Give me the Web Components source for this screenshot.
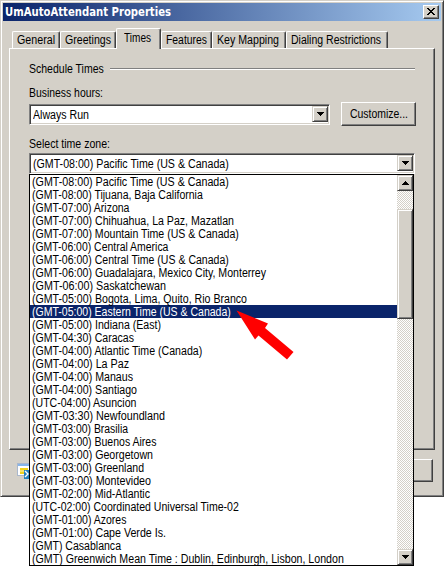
<!DOCTYPE html>
<html lang="en">
<head>
<meta charset="utf-8">
<title>UmAutoAttendant Properties</title>
<style>
html,body{margin:0;background:#fff;height:566px;overflow:hidden}
body{width:444px;position:relative;font:12px "Liberation Sans",Arial,sans-serif;color:#000}
</style>
</head>
<body>
<properties-dialog></properties-dialog>
<script>
const define = (name, html, setup) => customElements.define(name, class extends HTMLElement {
  constructor() {
    super();
    this.attachShadow({ mode: 'open' });
  }
  connectedCallback() {
    if (this.shadowRoot.childNodes.length) return;
    const t = document.createElement('template');
    t.innerHTML = typeof html === 'function' ? html(this) : html;
    this.shadowRoot.append(t.content.cloneNode(true));
    if (setup) setup(this);
  }
});

/* One line of text, condensed to the width given by "w". */
const pen = document.createElement('canvas').getContext('2d');
define('ui-text', `<style>
:host{display:block;height:13px;line-height:13px;white-space:pre;flex:none}
span{display:block;width:max-content;transform-origin:0 0}
</style><span><slot></slot></span>`, el => {
  const w = +el.getAttribute('w');
  pen.font = el.hasAttribute('bold') ? 'bold 11.5px "DejaVu Sans"' : '12px "Liberation Sans"';
  const span = el.shadowRoot.querySelector('span');
  span.style.font = pen.font;
  span.style.lineHeight = '13px';
  el.style.width = w + 'px';
  span.style.transform = `scaleX(${w / pen.measureText(el.textContent).width})`;
});

/* Raised button face. */
define('ui-button', `<style>
:host{display:flex;align-items:center;justify-content:center;box-sizing:border-box;background:#d4d0c8;border:1px solid;border-color:#fff #404040 #404040 #fff;box-shadow:inset -1px -1px #808080;flex:none}
</style><slot></slot>`);

/* Square button with a triangle or a cross. */
define('ui-glyph-button', el => {
  const k = el.getAttribute('kind');
  const d = k === 'up' ? 'M4 9h7v-1h-1v-1h-1v-1h-1v-1h-1v1h-1v1h-1v1h-1z'
    : k === 'down' ? 'M4 5h7v1h-1v1h-1v1h-1v1h-1v-1h-1v-1h-1v-1h-1z'
    : 'M3 2h2v1h1v1h2v-1h1v-1h2v1h-1v1h-1v1h-1v1h1v1h1v1h1v1h-2v-1h-1v-1h-2v1h-1v1h-2v-1h1v-1h1v-1h1v-1h-1v-1h-1v-1h-1z';
  return `<style>
:host{display:block;box-sizing:border-box;width:16px;height:16px;flex:none;background:#d4d0c8;border:1px solid;border-color:#d4d0c8 #404040 #404040 #d4d0c8;box-shadow:inset 1px 1px #fff,inset -1px -1px #808080}
:host([kind=close]){height:14px;border-color:#fff #404040 #404040 #fff;box-shadow:inset -1px -1px #808080}
svg{display:block}
</style><svg width="14" height="${k === 'close' ? 12 : 14}" shape-rendering="crispEdges"><path d="${d}"/></svg>`;
});

define('ui-combo', `<style>
:host{display:flex;box-sizing:border-box;height:21px;background:#fff;border:1px solid;border-color:#808080 #fff #fff #808080;box-shadow:inset 1px 1px #404040,inset -1px -1px #d4d0c8;padding:1px;flex:none}
div{flex:1;padding:3px 0 0 2px}
</style><div><slot></slot></div><ui-glyph-button kind="down"></ui-glyph-button>`);

define('ui-tab', `<style>
:host{display:block;box-sizing:border-box;height:17px;border:solid;border-width:1px 1px 0;border-color:#fff #404040 #fff #fff;border-radius:2px 2px 0 0;box-shadow:inset -1px 0 #808080;padding:2px 0 0 4px;flex:none}
:host([active]){height:21px;padding:3px 0 0 7px;background:#d4d0c8;margin-bottom:-1px;z-index:1;position:relative}
</style><slot></slot>`);

define('ui-titlebar', `<style>
:host{display:flex;align-items:center;justify-content:space-between;box-sizing:border-box;height:18px;padding:0 2px;background:linear-gradient(90deg,#0a246a,#a6caf0);color:#fff;flex:none}
</style><slot></slot><ui-glyph-button kind="close"></ui-glyph-button>`);

define('ui-group-title', `<style>
:host{display:flex;align-items:flex-start;gap:6px;height:13px;flex:none}
i{flex:1;height:1px;background:#808080;border-bottom:1px solid #fff;margin-top:5px}
</style><slot></slot><i></i>`);

define('ui-scrollbar', `<style>
:host{display:flex;flex-direction:column;width:16px;flex:none;background:repeating-conic-gradient(#fff 0 25%,#d4d0c8 0 50%) 0 0/2px 2px}
.thumb{margin-top:18px;height:110px;box-sizing:border-box;background:#d4d0c8;border:1px solid;border-color:#d4d0c8 #404040 #404040 #d4d0c8;box-shadow:inset 1px 1px #fff,inset -1px -1px #808080}
.gap{flex:1}
</style><ui-glyph-button kind="up"></ui-glyph-button><div class="thumb"></div><div class="gap"></div><ui-glyph-button kind="down"></ui-glyph-button>`);

const zones = [
['(GMT-08:00) Pacific Time (US & Canada)',229],['(GMT-08:00) Tijuana, Baja California',203],['(GMT-07:00) Arizona',130],
['(GMT-07:00) Chihuahua, La Paz, Mazatlan',234],['(GMT-07:00) Mountain Time (US & Canada)',239],['(GMT-06:00) Central America',169],
['(GMT-06:00) Central Time (US & Canada)',229],['(GMT-06:00) Guadalajara, Mexico City, Monterrey',266],['(GMT-06:00) Saskatchewan',166],
['(GMT-05:00) Bogota, Lima, Quito, Rio Branco',247],['(GMT-05:00) Eastern Time (US & Canada)',231],['(GMT-05:00) Indiana (East)',161],
['(GMT-04:30) Caracas',134],['(GMT-04:00) Atlantic Time (Canada)',203],['(GMT-04:00) La Paz',129],['(GMT-04:00) Manaus',133],
['(GMT-04:00) Santiago',137],['(UTC-04:00) Asuncion',137],['(GMT-03:30) Newfoundland',165],['(GMT-03:00) Brasilia',128],
['(GMT-03:00) Buenos Aires',157],['(GMT-03:00) Georgetown',153],['(GMT-03:00) Greenland',144],['(GMT-03:00) Montevideo',151],
['(GMT-02:00) Mid-Atlantic',150],['(UTC-02:00) Coordinated Universal Time-02',239],['(GMT-01:00) Azores',127],['(GMT-01:00) Cape Verde Is.',166],
['(GMT) Casablanca',121],['(GMT) Greenwich Mean Time : Dublin, Edinburgh, Lisbon, London',344]];

define('zone-list', `<style>
:host{display:flex;box-sizing:border-box;width:385px;height:392px;background:#fff;border:1px solid #000}
.rows{flex:1;display:flex;flex-direction:column}
.row{box-sizing:border-box;height:13px;padding:1px 0 0 2px}
.sel{background:#0a246a;color:#fff}
</style><div class="rows">${zones.map(([t, r], i) =>
  `<div class="row${i === 10 ? ' sel' : ''}"><ui-text w="${r - 32}">${t.replace('&', '&amp;')}</ui-text></div>`).join('')}</div><ui-scrollbar></ui-scrollbar>`);

define('properties-dialog', `<style>
:host{display:block}
.window{display:flex;flex-direction:column;box-sizing:border-box;width:444px;height:497px;background:#d4d0c8;border:1px solid;border-color:#d4d0c8 #404040 #404040 #d4d0c8;box-shadow:inset 1px 1px #fff,inset -1px -1px #808080;padding:2px}
.tabs{display:flex;align-items:flex-end;height:20px;margin:7px 0 0 9px;flex:none}
.page{box-sizing:border-box;width:426px;height:402px;margin-left:6px;border:1px solid;border-color:#fff #404040 #404040 #fff;box-shadow:inset -1px -1px #808080;padding:14px 19px 0;display:flex;flex-direction:column;flex:none}
.line{display:flex;gap:11px;margin-top:2px}
.l1{margin-top:11px}
.hours{width:301px;margin-top:2px}
.l2{margin-top:12px}
.zone{width:386px;margin-top:2px}
.footer{display:flex;justify-content:space-between;align-items:flex-start;padding:9px 8px 0 14px}
.footer svg{margin-top:4px}
.list{position:absolute;left:29px;top:174px}
.arrow{position:absolute;left:236px;top:310px}
</style>
<div class="window">
 <ui-titlebar><ui-text bold w="166">UmAutoAttendant Properties</ui-text></ui-titlebar>
 <div class="tabs">
  <ui-tab style="width:48px"><ui-text w="38">General</ui-text></ui-tab>
  <ui-tab style="width:56px"><ui-text w="46">Greetings</ui-text></ui-tab>
  <ui-tab active style="width:45px"><ui-text w="27">Times</ui-text></ui-tab>
  <ui-tab style="width:51px"><ui-text w="41">Features</ui-text></ui-tab>
  <ui-tab style="width:74px"><ui-text w="62">Key Mapping</ui-text></ui-tab>
  <ui-tab style="width:102px"><ui-text w="90">Dialing Restrictions</ui-text></ui-tab>
 </div>
 <div class="page">
  <ui-group-title><ui-text w="75">Schedule Times</ui-text></ui-group-title>
  <ui-text class="l1" w="74">Business hours:</ui-text>
  <div class="line"><ui-combo class="hours"><ui-text w="56">Always Run</ui-text></ui-combo>
  <ui-button style="width:75px;height:24px"><ui-text w="58">Customize...</ui-text></ui-button></div>
  <ui-text class="l2" w="81">Select time zone:</ui-text>
  <ui-combo class="zone"><ui-text w="196">(GMT-08:00) Pacific Time (US &amp; Canada)</ui-text></ui-combo>
 </div>
 <div class="footer">
  <svg width="18" height="17"><rect x=".5" y=".5" width="16" height="12" fill="#fff" stroke="#a9b7cc"/><path d="M1 1h15v2H1z" fill="#86b5ea"/><path d="M3 5h8v2H3zM3 9h4v2H3z" fill="#f1d21c"/><path d="M3 7h8v2H3z" fill="#f7e46b"/><path d="M7 7h11v9H7z" fill="#2480bd"/><path d="M8 8l3 3-3 3" fill="none" stroke="#fff" stroke-width="1.4"/></svg>
  <ui-button style="width:75px;height:23px"></ui-button>
 </div>
</div>
<zone-list class="list"></zone-list>
<svg class="arrow" width="60" height="52"><path d="M.5 .5L32 13.5 29 18 57.5 42 51 49.5 22.500 25.500 19 29.500z" fill="#f00"/></svg>`);
</script>
</body>
</html>
